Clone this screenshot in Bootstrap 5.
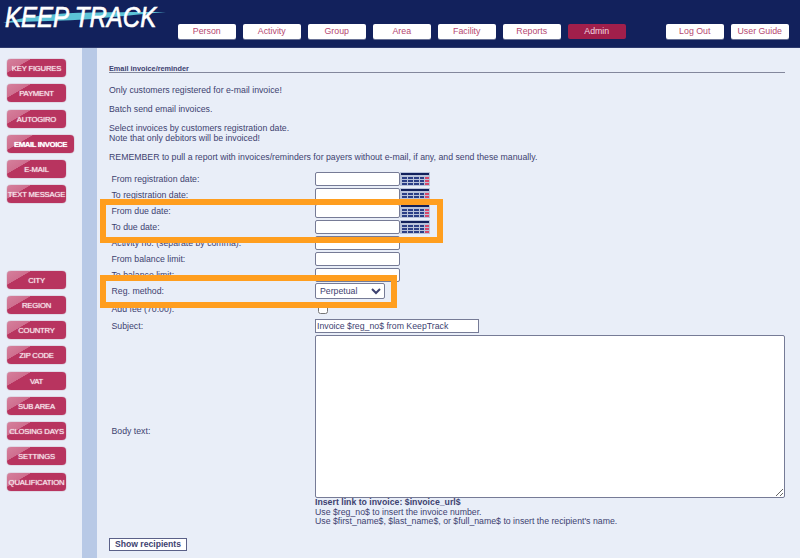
<!DOCTYPE html>
<html lang="en">
<head>
  <meta charset="UTF-8" />
  <meta name="viewport" content="width=device-width, initial-scale=1.0"/>
  <title>Keep Track - Email invoice</title>
  <link href="https://cdn.jsdelivr.net/npm/bootstrap@5.3.6/dist/css/bootstrap.min.css" rel="stylesheet"/>
  <style>
    html, body { height: 100%; overflow: hidden; }
    body { background: #e9eef8; color: #3d4270; font-family: "Liberation Sans", Arial, sans-serif; font-size: 8.74px; line-height: 10px; }

    /* Header */
    .kt-header { height: 48px; background: #12215c; border-bottom: 1px solid #2d3a6e; }
    .kt-logo { width: 178px; height: 48px; }
    .kt-logo-swoosh { left: 3px; top: 7px; }
    .kt-logo-text { left: 5px; top: 1px; font: italic 400 30px/32px "Liberation Sans", sans-serif; color: #fff; transform: scaleX(.8); transform-origin: 0 0; white-space: nowrap; -webkit-text-stroke: .7px #fff; }
    .kt-menu { padding-top: 24px; gap: 7.5px; }
    .kt-tab { width: 57.5px; height: 15px; background: #fff; border-radius: 2px; color: #b5476f; font-size: 8.8px; line-height: 15px; text-align: center; text-decoration: none; box-shadow: 0 1px 0 #6a7396; }
    .kt-tab-active { background: #a11f4b; color: #f2d7e0; box-shadow: none; }
    .kt-gap-left { margin-left: 33px; }

    /* Side menu */
    .kt-side { width: 82px; padding: 11px 0 0 7px; }
    .kt-side-btn { width: 59px; height: 18px; margin-bottom: 7.25px; border-radius: 4px; background: linear-gradient(150deg, #d5809c 0, #cf6f8f 26%, #b8345f 27%, #b8345f 100%); color: #f6e3ea; font-size: 7.7px; letter-spacing: -.2px; line-height: 19px; text-align: center; white-space: nowrap; text-decoration: none; text-shadow: 0 0 1px #f6e3ea; box-shadow: 0 0 1px #8b2347; }
    .kt-side-wide { width: 67px; color: #fff; font-size: 7.8px; font-weight: 700; letter-spacing: -.4px; }
    .kt-side-space { height: 60px; }
    .kt-stripe { width: 15px; background: #b8c9e6; }

    /* Content */
    .kt-main { padding: 17px 16px 0 12px; }
    .kt-title { font-size: 7.3px; font-weight: 700; line-height: 9px; border-bottom: 1px solid #83879c; height: 8px; margin-bottom: 12px; }
    .kt-title span { position: relative; top: -1px; }
    .kt-para { margin: 0 0 9px; }
    .kt-form { margin-top: 8px; padding-left: 2.5px; }
    .kt-row { height: 16px; }
    .kt-row-check { height: 19px; }
    .kt-label { width: 203.5px; flex: none; margin-bottom: 0; }
    .kt-input { width: 85px; height: 14px; padding: 0 1px; border: 1px solid #767b96; border-radius: 2px; background: #fff; font: 8.74px "Liberation Sans", sans-serif; color: #3d4270; }
    .kt-input-subject { width: 164px; border-radius: 0; }
    .kt-select { width: 70px; height: 16px; border: 1px solid #767b96; border-radius: 2px; background: #fff; font: 8.74px "Liberation Sans", sans-serif; color: #3d4270; }
    .kt-check { width: 10px; height: 10px; margin-left: 3px; }
    .kt-text { width: 470px; height: 163px; display: block; margin-top: 1px; padding: 2px; border: 1px solid #767b96; border-radius: 2px; background: #fff; resize: both; }
    .kt-help { line-height: 9.7px; }
    .kt-show { margin-top: 11px; width: 78px; height: 13px; padding: 0; border: 1px solid #5a6088; background: #fff; color: #3d4270; font: 700 8.6px/11px "Liberation Sans", sans-serif; border-radius: 0; }

    /* Highlight boxes */
    .kt-mark { border: 6px solid #ff9e1f; }
    .kt-mark-due { left: 100px; top: 199px; width: 343px; height: 44px; }
    .kt-mark-method { left: 100px; top: 275px; width: 297px; height: 33px; }
  </style>
</head>
<body>
  <div class="d-flex flex-column vh-100 position-relative overflow-hidden">
    <header class="kt-header d-flex flex-shrink-0">
      <div class="kt-logo position-relative flex-shrink-0">
        <svg class="kt-logo-swoosh position-absolute" width="165" height="20" viewBox="0 0 165 20">
          <path d="M0 16 C20 10 45 7 70 6 C100 5 140 5 163 5 C130 8 110 10 90 12 C60 14 30 14 0 16Z" fill="#5cc3d6"/>
        </svg>
        <span class="kt-logo-text position-absolute">KEEP TRACK</span>
      </div>
      <nav class="kt-menu d-flex">
        <a class="kt-tab" href="#">Person</a>
        <a class="kt-tab" href="#">Activity</a>
        <a class="kt-tab" href="#">Group</a>
        <a class="kt-tab" href="#">Area</a>
        <a class="kt-tab" href="#">Facility</a>
        <a class="kt-tab" href="#">Reports</a>
        <a class="kt-tab kt-tab-active" href="#">Admin</a>
        <a class="kt-tab kt-gap-left" href="#">Log Out</a>
        <a class="kt-tab" href="#">User Guide</a>
      </nav>
    </header>

    <div class="d-flex flex-grow-1">
      <aside class="kt-side d-flex flex-column flex-shrink-0">
        <a class="kt-side-btn" href="#">KEY FIGURES</a>
        <a class="kt-side-btn" href="#">PAYMENT</a>
        <a class="kt-side-btn" href="#">AUTOGIRO</a>
        <a class="kt-side-btn kt-side-wide" href="#">EMAIL INVOICE</a>
        <a class="kt-side-btn" href="#">E-MAIL</a>
        <a class="kt-side-btn" href="#">TEXT MESSAGE</a>
        <div class="kt-side-space"></div>
        <a class="kt-side-btn" href="#">CITY</a>
        <a class="kt-side-btn" href="#">REGION</a>
        <a class="kt-side-btn" href="#">COUNTRY</a>
        <a class="kt-side-btn" href="#">ZIP CODE</a>
        <a class="kt-side-btn" href="#">VAT</a>
        <a class="kt-side-btn" href="#">SUB AREA</a>
        <a class="kt-side-btn" href="#">CLOSING DAYS</a>
        <a class="kt-side-btn" href="#">SETTINGS</a>
        <a class="kt-side-btn" href="#">QUALIFICATION</a>
      </aside>
      <div class="kt-stripe flex-shrink-0"></div>

      <main class="kt-main flex-grow-1">
        <div class="kt-title"><span>Email invoice/reminder</span></div>
        <p class="kt-para">Only customers registered for e-mail invoice!</p>
        <p class="kt-para">Batch send email invoices.</p>
        <p class="kt-para">Select invoices by customers registration date.<br>Note that only debitors will be invoiced!</p>
        <p class="kt-para">REMEMBER to pull a report with invoices/reminders for payers without e-mail, if any, and send these manually.</p>

        <form class="kt-form" onsubmit="return false">
          <div class="kt-row d-flex align-items-center">
            <label class="kt-label">From registration date:</label>
            <input class="kt-input" type="text">
            <svg width="30" height="14" viewBox="0 0 30 14"><use href="#kt-cal"/></svg>
          </div>
          <div class="kt-row d-flex align-items-center">
            <label class="kt-label">To registration date:</label>
            <input class="kt-input" type="text">
            <svg width="30" height="14" viewBox="0 0 30 14"><use href="#kt-cal"/></svg>
          </div>
          <div class="kt-row d-flex align-items-center">
            <label class="kt-label">From due date:</label>
            <input class="kt-input" type="text">
            <svg width="30" height="14" viewBox="0 0 30 14"><use href="#kt-cal"/></svg>
          </div>
          <div class="kt-row d-flex align-items-center">
            <label class="kt-label">To due date:</label>
            <input class="kt-input" type="text">
            <svg width="30" height="14" viewBox="0 0 30 14"><use href="#kt-cal"/></svg>
          </div>
          <div class="kt-row d-flex align-items-center">
            <label class="kt-label">Activity no. (separate by comma):</label>
            <input class="kt-input" type="text">
          </div>
          <div class="kt-row d-flex align-items-center">
            <label class="kt-label">From balance limit:</label>
            <input class="kt-input" type="text">
          </div>
          <div class="kt-row d-flex align-items-center">
            <label class="kt-label">To balance limit:</label>
            <input class="kt-input" type="text">
          </div>
          <div class="kt-row d-flex align-items-center">
            <label class="kt-label">Reg. method:</label>
            <select class="kt-select"><option>Perpetual</option></select>
          </div>
          <div class="kt-row kt-row-check d-flex align-items-center">
            <label class="kt-label">Add fee (70.00):</label>
            <input class="kt-check" type="checkbox">
          </div>
          <div class="kt-row d-flex align-items-center">
            <label class="kt-label">Subject:</label>
            <input class="kt-input kt-input-subject" type="text" value="Invoice $reg_no$ from KeepTrack">
          </div>
          <div class="d-flex align-items-center">
            <label class="kt-label">Body text:</label>
            <div>
              <textarea class="kt-text"></textarea>
              <div class="kt-help">
                <strong>Insert link to invoice: $invoice_url$</strong><br>
                Use $reg_no$ to insert the invoice number.<br>
                Use $first_name$, $last_name$, or $full_name$ to insert the recipient's name.
              </div>
            </div>
          </div>
        </form>
        <button class="kt-show" type="button">Show recipients</button>
      </main>
    </div>

    <div class="kt-mark kt-mark-due position-absolute"></div>
    <div class="kt-mark kt-mark-method position-absolute"></div>
  </div>

  <svg width="0" height="0" class="position-absolute">
    <symbol id="kt-cal" viewBox="0 0 30 14">
      <rect width="30" height="14" fill="#b9c3da"/>
      <rect x="1" y="1" width="28" height="2" fill="#12215c"/>
      <g fill="#2c3f86">
        <rect x="2" y="5" width="5" height="2"/><rect x="8" y="5" width="5" height="2"/><rect x="14" y="5" width="5" height="2"/><rect x="20" y="5" width="4" height="2"/>
        <rect x="2" y="8" width="5" height="2"/><rect x="8" y="8" width="5" height="2"/><rect x="14" y="8" width="5" height="2"/><rect x="20" y="8" width="4" height="2"/>
        <rect x="2" y="11" width="5" height="2"/><rect x="8" y="11" width="5" height="2"/><rect x="14" y="11" width="5" height="2"/><rect x="20" y="11" width="4" height="2"/>
      </g>
      <g fill="#d6476b">
        <rect x="25" y="5" width="4" height="2"/><rect x="25" y="8" width="4" height="2"/><rect x="25" y="11" width="4" height="2"/>
      </g>
    </symbol>
  </svg>

  <script src="https://cdn.jsdelivr.net/npm/bootstrap@5.3.6/dist/js/bootstrap.bundle.min.js"></script>
</body>
</html>
